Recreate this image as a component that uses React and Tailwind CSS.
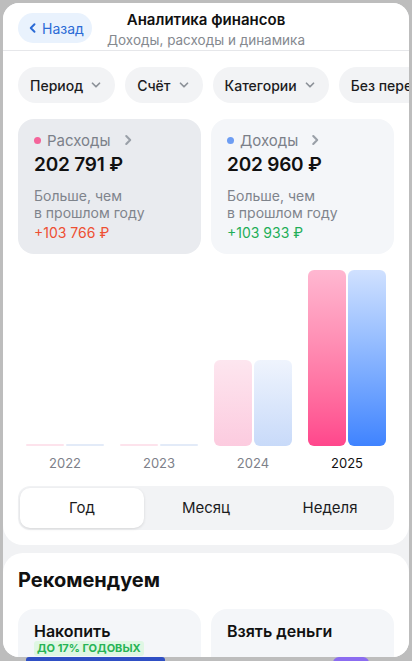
import React from 'react';

const Chevron = ({ className }) => (
    <svg viewBox="0 0 16 16" className={className} fill="none" stroke="currentColor" strokeWidth="2" strokeLinecap="round" strokeLinejoin="round">
        <path d="M4 6l4 4 4-4" />
    </svg>
);

const ChevronRight = ({ className }) => (
    <svg viewBox="0 0 16 16" className={className} fill="none" stroke="currentColor" strokeWidth="2.4" strokeLinecap="round" strokeLinejoin="round">
        <path d="M6 3.5l4.5 4.5L6 12.5" />
    </svg>
);

const chips = ['Период', 'Счёт', 'Категории', 'Без перевода'];

const years = [
    { year: '2022', h: 2, pink: 'bg-[#fde3ec]', blue: 'bg-[#e3ebf8]' },
    { year: '2023', h: 2, pink: 'bg-[#fde3ec]', blue: 'bg-[#e3ebf8]' },
    { year: '2024', h: 86, pink: 'bg-gradient-to-b from-[#fde6ef] to-[#fccbdf]', blue: 'bg-gradient-to-b from-[#eff4fd] to-[#c8daf9]' },
    { year: '2025', h: 176, pink: 'bg-gradient-to-b from-[#ffb7d1] to-[#ff468c]', blue: 'bg-gradient-to-b from-[#d0e1ff] to-[#3f83ff]', active: true },
];

function StatCard({ dot, label, amount, delta, deltaColor, bg }) {
    return (
        <div className={`flex-1 rounded-[16px] ${bg} pl-4 pr-3 pt-[11px] pb-[13px]`}>
            <div className="flex items-center gap-[6px] h-[20px]">
                <span className={`w-[7px] h-[7px] rounded-full ${dot}`} />
                <span className="text-[15px] text-[#7b8089] leading-none">{label}</span>
                <ChevronRight className="w-[14px] h-[14px] text-[#9aa0a8] ml-[4px]" />
            </div>
            <div className="mt-[3px] text-[19px] font-semibold text-[#111] leading-[24px] tracking-[-0.2px]">{amount}</div>
            <div className="mt-[10px] text-[14px] text-[#7f848c] leading-[17px]">Больше, чем<br />в прошлом году</div>
            <div className={`mt-[3px] text-[14px] leading-[17px] ${deltaColor}`}>{delta}</div>
        </div>
    );
}

export default function App() {
    return (
        <div className="w-[412px] h-[661px] bg-[#bdbdbd] overflow-hidden pt-[3px] px-[3px]" style={{ fontFamily: 'Inter, "Noto Sans", sans-serif' }}>
            <div className="h-[654px] rounded-[16px] bg-[#f1f2f4] overflow-hidden">
                <div className="bg-white rounded-b-[20px] pb-[15px]">
                    <div className="grid grid-cols-[1fr_auto_1fr] items-start h-[48px] border-b border-[#e6e7ea]">
                        <div className="pl-[15px] pt-[10px]">
                            <button className="flex items-center gap-[3px] h-[30px] pl-[9px] pr-[8px] rounded-full bg-[#e9f2fd] text-[#2b6bd6] text-[14px]">
                                <svg viewBox="0 0 16 16" className="w-[12px] h-[12px]" fill="none" stroke="currentColor" strokeWidth="2.6" strokeLinecap="round" strokeLinejoin="round"><path d="M10 3L5 8l5 5" /></svg>
                                Назад
                            </button>
                        </div>
                        <div className="text-center pt-[8px]">
                            <div className="text-[15px] font-semibold text-[#111] leading-[18px]">Аналитика финансов</div>
                            <div className="text-[13.5px] text-[#85898f] leading-[18px] mt-[2px]">Доходы, расходы и динамика</div>
                        </div>
                        <div />
                    </div>

                    <div className="flex gap-[10px] pl-[15px] mt-[16px] overflow-hidden whitespace-nowrap">
                        {chips.map((c) => (
                            <div key={c} className="flex items-center gap-[6px] h-[36px] pl-[12px] pr-[12px] rounded-full bg-[#f2f3f5] text-[14px] font-medium text-[#1c1c1e] shrink-0">
                                {c}
                                <Chevron className="w-[14px] h-[14px] text-[#8c9198]" />
                            </div>
                        ))}
                    </div>

                    <div className="flex gap-[10px] px-[15px] mt-[16px]">
                        <StatCard dot="bg-[#f4649a]" label="Расходы" amount="202 791 ₽" delta="+103 766 ₽" deltaColor="text-[#ee4f32]" bg="bg-[#e9ebef]" />
                        <StatCard dot="bg-[#6d9df3]" label="Доходы" amount="202 960 ₽" delta="+103 933 ₽" deltaColor="text-[#1fae58]" bg="bg-[#f4f6f9]" />
                    </div>

                    <div className="grid grid-cols-4 px-[15px] mt-[16px]">
                        {years.map((y) => (
                            <div key={y.year} className="flex flex-col items-center">
                                <div className="h-[176px] flex items-end gap-[2px]">
                                    <div className={`w-[38px] rounded-[6px] ${y.pink}`} style={{ height: y.h }} />
                                    <div className={`w-[38px] rounded-[6px] ${y.blue}`} style={{ height: y.h }} />
                                </div>
                                <div className={`mt-[9px] text-[13px] leading-[16px] ${y.active ? 'text-[#111]' : 'text-[#7d8189]'}`}>{y.year}</div>
                            </div>
                        ))}
                    </div>

                    <div className="mx-[15px] mt-[15px] h-[44px] rounded-[12px] bg-[#f2f3f5] p-[2px] grid grid-cols-3 text-[15px] text-[#1c1c1e]">
                        <div className="rounded-[10px] bg-white shadow-[0_1px_3px_rgba(0,0,0,0.12)] flex items-center justify-center">Год</div>
                        <div className="flex items-center justify-center">Месяц</div>
                        <div className="flex items-center justify-center">Неделя</div>
                    </div>
                </div>

                <div className="mt-[8px] bg-white rounded-t-[20px] px-[15px] pt-[13px]">
                    <div className="text-[20px] font-bold text-[#111] leading-[28px]">Рекомендуем</div>
                    <div className="flex gap-[10px] mt-[15px]">
                        <div className="flex-1 h-[80px] rounded-[16px] bg-[#f4f6f9] pl-4 pt-[12px]">
                            <div className="text-[16px] font-semibold text-[#111] leading-[20px]">Накопить</div>
                            <div className="w-fit mt-0 px-[3px] rounded-[3px] bg-[#dff7e3] text-[#27b455] text-[11px] font-bold leading-[15px]">ДО 17% ГОДОВЫХ</div>
                        </div>
                        <div className="flex-1 h-[80px] rounded-[16px] bg-[#f4f6f9] pl-4 pt-[12px]">
                            <div className="text-[16px] font-semibold text-[#111] leading-[20px]">Взять деньги</div>
                        </div>
                    </div>
                </div>
            </div>
            <div className="flex">
                <div className="ml-[23px] w-[139px] h-[6px] bg-[#2f4fc4] rounded-t-[3px]" />
                <div className="ml-[168px] w-[36px] h-[6px] bg-[#8b6cf0] rounded-t-[6px]" />
            </div>
        </div>
    );
}
